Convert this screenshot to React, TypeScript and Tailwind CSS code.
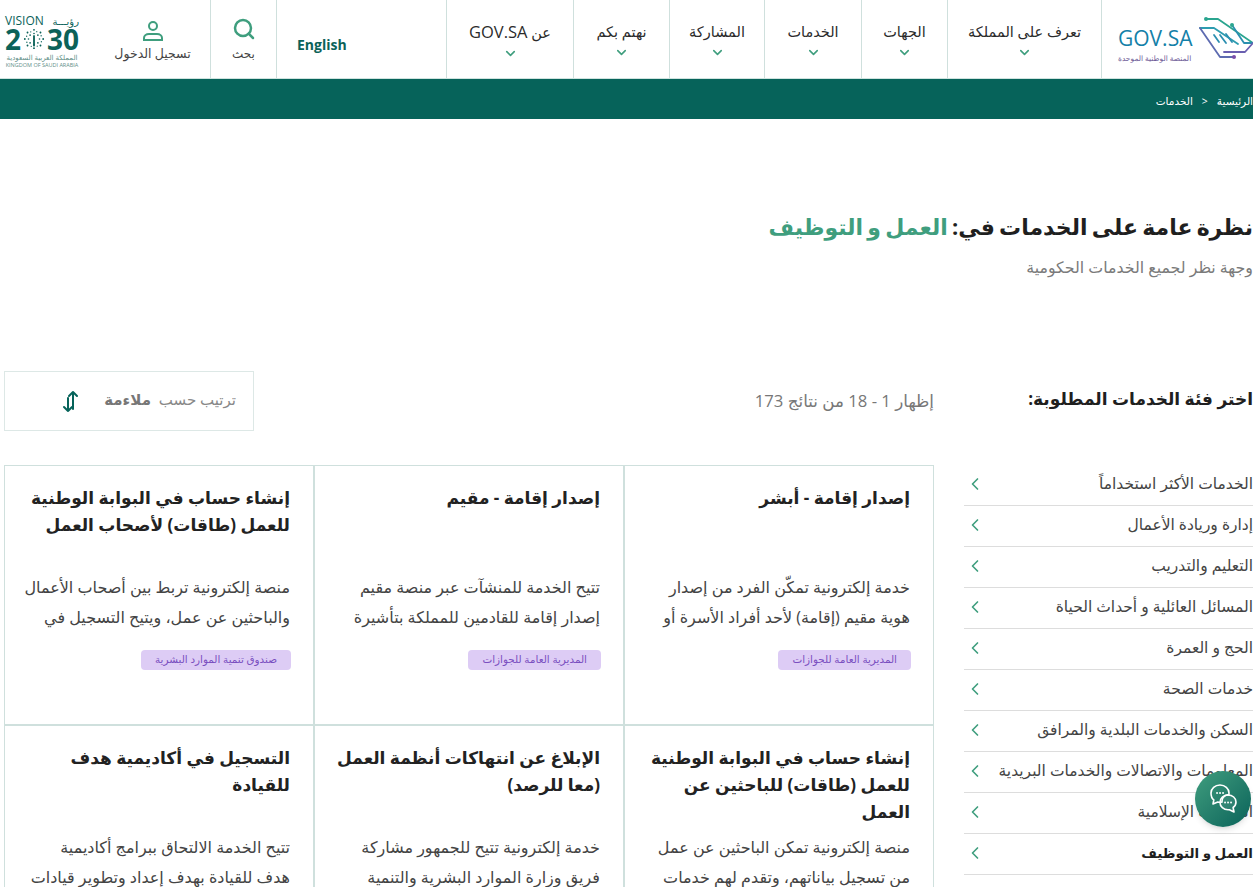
import { ChevronDown, ChevronLeft, Search } from "lucide-react";

const arabic = '"Open Sans", "Noto Sans", "DejaVu Sans", sans-serif';

const navItems = [
  { label: "تعرف على المملكة", width: "w-[154px]" },
  { label: "الجهات", width: "w-[86px]" },
  { label: "الخدمات", width: "w-[97px]" },
  { label: "المشاركة", width: "w-[95px]" },
  { label: "نهتم بكم", width: "w-[96px]" },
];

const categories = [
  "الخدمات الأكثر استخداماً",
  "إدارة وريادة الأعمال",
  "التعليم والتدريب",
  "المسائل العائلية و أحداث الحياة",
  "الحج و العمرة",
  "خدمات الصحة",
  "السكن والخدمات البلدية والمرافق",
  "المعلومات والاتصالات والخدمات البريدية",
  "الخدمات الإسلامية",
  "العمل و التوظيف",
  "الوثائق والخدمات",
];

const services = [
  {
    title: "إصدار إقامة - أبشر",
    desc: "خدمة إلكترونية تمكّن الفرد من إصدار هوية مقيم (إقامة) لأحد أفراد الأسرة أو",
    tag: "المديرية العامة للجوازات",
  },
  {
    title: "إصدار إقامة - مقيم",
    desc: "تتيح الخدمة للمنشآت عبر منصة مقيم إصدار إقامة للقادمين للمملكة بتأشيرة",
    tag: "المديرية العامة للجوازات",
  },
  {
    title: "إنشاء حساب في البوابة الوطنية للعمل (طاقات) لأصحاب العمل",
    desc: "منصة إلكترونية تربط بين أصحاب الأعمال والباحثين عن عمل، ويتيح التسجيل في",
    tag: "صندوق تنمية الموارد البشرية",
  },
  {
    title: "إنشاء حساب في البوابة الوطنية للعمل (طاقات) للباحثين عن العمل",
    desc: "منصة إلكترونية تمكن الباحثين عن عمل من تسجيل بياناتهم، وتقدم لهم خدمات",
    tag: "صندوق تنمية الموارد البشرية",
  },
  {
    title: "الإبلاغ عن انتهاكات أنظمة العمل (معا للرصد)",
    desc: "خدمة إلكترونية تتيح للجمهور مشاركة فريق وزارة الموارد البشرية والتنمية",
    tag: "وزارة الموارد البشرية",
  },
  {
    title: "التسجيل في أكاديمية هدف للقيادة",
    desc: "تتيح الخدمة الالتحاق ببرامج أكاديمية هدف للقيادة بهدف إعداد وتطوير قيادات",
    tag: "صندوق تنمية الموارد البشرية",
  },
];

function GovLogo() {
  return (
    <div className="flex w-[151px] shrink-0 items-start gap-[5px] pl-[16px] pt-[15px]" dir="ltr">
      <div className="flex w-[76px] shrink-0 flex-col items-start pt-[10px]">
        <span className="text-[21px] leading-[26px] text-[#1380a8]">GOV.SA</span>
        <span className="mt-[1px] text-[7.5px] leading-[12px] text-[#6f5c98]" dir="rtl">
          المنصة الوطنية الموحدة
        </span>
      </div>
      <svg width="55" height="46" viewBox="0 0 55 46" fill="none" strokeWidth="1.800" strokeLinecap="round" strokeLinejoin="round" className="shrink-0">
        <path d="M7 4h12l35 24" stroke="#2aa58f" />
        <path d="M1 13h14l24 16" stroke="#2d9cb0" />
        <path d="M33 10l12 18h9" stroke="#2b8fb0" />
        <path d="M1 13l20 29h14" stroke="#5d6bb0" />
        <path d="M54 28l-8 9H25" stroke="#6a5fb0" />
        <path d="M15 20l5 7M21 20l6 8M27 19l6 8" stroke="#2b8fb0" />
        <circle cx="7" cy="4" r="2" fill="#2aa58f" />
        <circle cx="33" cy="10" r="2" fill="#2aa58f" />
        <circle cx="35" cy="42" r="2" fill="#7a4fa8" />
      </svg>
    </div>
  );
}

function VisionLogo() {
  return (
    <div className="flex w-[94px] shrink-0 flex-col items-center pr-[12px] pt-[15px] text-[#0b6259]" dir="ltr">
      <div className="flex w-[74px] justify-between text-[12px] leading-[12px]">
        <span>VISION</span>
        <span className="text-[10px]" dir="rtl">
          رؤيـــة
        </span>
      </div>
      <div className="flex h-[24px] w-[74px] items-center justify-between text-[28px] font-bold leading-[24px]">
        <span>2</span>
        <svg width="24" height="22" viewBox="0 0 24 24" fill="#0b6259">
          {[0, 45, 90, 135, 180, 225, 270, 315].map((a) => (
            <g key={a} transform={`rotate(${a} 12 12)`}>
              <circle cx="12" cy="2" r="1" />
              <circle cx="12" cy="6" r="0.9" />
              <circle cx="15" cy="4" r="0.7" />
            </g>
          ))}
          <rect x="11" y="8" width="2" height="12" />
        </svg>
        <span>30</span>
      </div>
      <span className="mt-[2px] text-[7px] leading-[9px] text-[#5f8f88]" dir="rtl">
        المملكة العربية السعودية
      </span>
      <span className="text-[5.5px] leading-[7px] text-[#5f8f88]">KINGDOM OF SAUDI ARABIA</span>
    </div>
  );
}

function ChatBubble() {
  return (
    <div className="fixed left-[1195px] top-[771px] flex h-[56px] w-[56px] items-center justify-center rounded-full bg-gradient-to-br from-[#3f9e7e] to-[#06635a] shadow-md">
      <svg width="34" height="34" viewBox="0 0 34 34" fill="none" stroke="#fff" strokeWidth="1.6" strokeLinejoin="round">
        <path d="M14 3c5 0 9 3.500 9 8 0 .8-.1 1.500-.3 2-3-.6-6.700 2-6.700 6 0 .3 0 .7.1 1-.7.2-1.400.2-2.100.2-.8 0-1.500-.1-2.200-.2L7 22l.8-4C5.800 16.500 5 14 5 11c0-4.500 4-8 9-8z" />
        <path d="M22 13c4.500 0 8 3 8 7 0 2.300-1.100 4.200-2.900 5.500L28 30l-4.600-2.300c-.5.1-.9.1-1.400.1-4.400 0-8-3.300-8-7.400S17.600 13 22 13z" fill="#fff" fillOpacity="0.08" />
        <path d="M11 11h.1M14 11h.1M17 11h.1M19 20.500h.1M22 20.500h.1M25 20.500h.1" strokeWidth="1.800" strokeLinecap="round" />
      </svg>
    </div>
  );
}

export default function App() {
  return (
    <div dir="rtl" className="h-[887px] overflow-hidden bg-white text-[#1f1f1f]" style={{ fontFamily: arabic }}>
      {/* Header */}
      <header className="flex h-[79px] border-b border-[#cfe3df]">
        <GovLogo />
        {navItems.map((item) => (
          <div
            key={item.label}
            className={`flex shrink-0 flex-col items-center border-r border-[#cfe0dd] pt-[20px] ${item.width}`}
          >
            <span className="text-[14.500px] leading-[24px] text-[#2b2b2b]">{item.label}</span>
            <ChevronDown size={15} strokeWidth={2.5} className="mt-[1px] text-[#3f9e7e]" />
          </div>
        ))}
        <div className="flex w-[127px] shrink-0 flex-col items-center border-r border-[#cfe0dd] pt-[20px]">
          <span className="text-[14.500px] leading-[24px] text-[#2b2b2b]">
            عن <span className="text-[16.500px]">GOV.SA</span>
          </span>
          <ChevronDown size={15} strokeWidth={2.5} className="mt-[1px] text-[#3f9e7e]" />
        </div>
        <div className="flex w-[170px] shrink-0 items-center border-r border-[#cfe0dd] pl-[20px] pt-[10px]" dir="ltr">
          <span className="text-[14px] font-bold text-[#0b6259]">English</span>
        </div>
        <div className="flex w-[66px] shrink-0 flex-col items-center border-r border-[#cfe0dd] pt-[17px]">
          <Search size={24} strokeWidth={2.5} className="text-[#3f9e7e]" />
          <span className="mt-[5px] text-[12px] leading-[16px] text-[#444]">بحث</span>
        </div>
        <div className="flex w-[116px] shrink-0 flex-col items-center border-r border-[#cfe0dd] pt-[20px]">
          <svg width="22" height="22" viewBox="0 0 22 22" fill="none" stroke="#3f9e7e" strokeWidth="2">
            <circle cx="11" cy="6" r="4" />
            <path d="M2 20v-2c0-2 2-4 5-4h8c3 0 5 2 5 4v2z" />
          </svg>
          <span className="mt-[4px] text-[12.500px] leading-[16px] text-[#444]">تسجيل الدخول</span>
        </div>
        <VisionLogo />
      </header>

      {/* Breadcrumb */}
      <nav className="flex h-[40px] items-center gap-[9px] bg-[#06635a] pt-[5px] text-[10.500px] text-white">
        <span>الرئيسية</span>
        <span dir="ltr">&gt;</span>
        <span>الخدمات</span>
      </nav>

      {/* Title */}
      <section className="pt-[88px]">
        <h1 className="text-[22px] font-bold leading-[38px] text-[#1f1f1f] [word-spacing:-1.5px]">
          نظرة عامة على الخدمات في: <span className="text-[#3f9e7e]">العمل و التوظيف</span>
        </h1>
        <p className="mt-[11px] text-[15.800px] leading-[22px] text-[#7a7a7a]">وجهة نظر لجميع الخدمات الحكومية</p>
      </section>

      {/* Filter row */}
      <div className="mt-[93px] flex h-[60px] items-center">
        <h2 className="-mt-[4px] w-[319px] shrink-0 text-[17px] font-bold">اختر فئة الخدمات المطلوبة:</h2>
        <p className="flex-1 text-[16.700px] text-[#777]">إظهار 1 - 18 من نتائج 173</p>
        <div className="ml-[4px] flex h-[60px] w-[250px] items-center justify-between border border-[#dde8e6] pl-[57px] pr-[17px]">
          <span className="pb-[4px] text-[15px] text-[#888]">
            ترتيب حسب <b className="mr-[4px] text-[#777]">ملاءمة</b>
          </span>
          <svg width="18" height="24" viewBox="0 0 18 24" fill="none" stroke="#06635a" strokeWidth="2" strokeLinecap="round" strokeLinejoin="round">
            <path d="M11 20V3M7 7l4-4 4 4" />
            <path d="M6 22V9M2 18l4 4 4-4" />
          </svg>
        </div>
      </div>

      {/* Body */}
      <div className="mt-[34px] flex">
        <ul className="w-[289px] shrink-0">
          {categories.map((name, i) => (
            <li
              key={name}
              className={`flex h-[41px] items-center justify-between border-b border-[#ddd] pb-[2px] ${i === 9 ? "text-[13.500px] font-bold text-[#1f1f1f]" : "text-[15.500px] text-[#444]"}`}
            >
              <span>{name}</span>
              <ChevronLeft size={20} strokeWidth={2} className="ml-[1px] text-[#3f9e7e]" />
            </li>
          ))}
        </ul>
        <div className="mr-[30px] grid w-[930px] shrink-0 grid-cols-3">
          {services.map((s) => (
            <article key={s.title} className="h-[260px] border border-[#cfe0dd] pl-[18px] pr-[23px] pt-[18px]">
              <h3 className="h-[81px] overflow-hidden text-[17px] font-bold leading-[27px] text-[#222]">{s.title}</h3>
              <p className="mt-[7px] h-[60px] overflow-hidden text-[16px] leading-[30px] text-[#444]">{s.desc}</p>
              <div className="-mr-px mt-[18px] flex">
                <span className="flex h-[20px] items-center rounded-[4px] bg-[#ddccf5] px-[14px] text-[10.400px] text-[#7a4fc0]">
                  {s.tag}
                </span>
              </div>
            </article>
          ))}
        </div>
      </div>

      <ChatBubble />
    </div>
  );
}
